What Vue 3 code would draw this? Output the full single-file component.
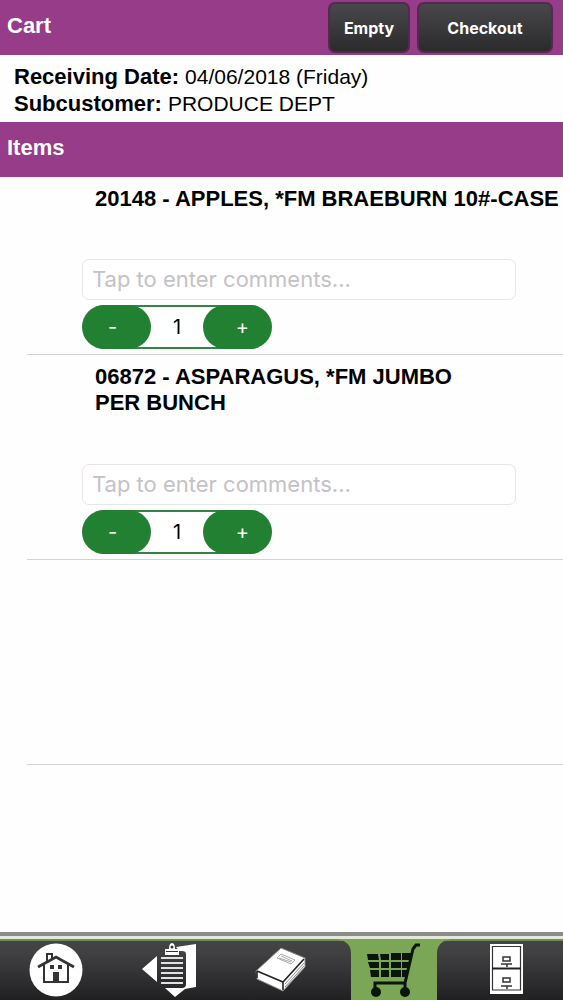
<script setup>
import { reactive } from 'vue'

const items = reactive([
  { id: '20148', lines: ['20148 - APPLES, *FM BRAEBURN 10#-CASE'], comment: '', qty: 1 },
  { id: '06872', lines: ['06872 - ASPARAGUS, *FM JUMBO', 'PER BUNCH'], comment: '', qty: 1 }
])

function step(item, delta) {
  item.qty = Math.max(0, item.qty + delta)
}
</script>

<template>
  <div class="screen">
    <header class="bar">
      <h1>Cart</h1>
      <div class="actions">
        <button type="button" class="action">Empty</button>
        <button type="button" class="action wide">Checkout</button>
      </div>
    </header>

    <dl class="info">
      <div><dt>Receiving Date:</dt><dd>04/06/2018 (Friday)</dd></div>
      <div><dt>Subcustomer:</dt><dd>PRODUCE DEPT</dd></div>
    </dl>

    <div class="bar"><h2>Items</h2></div>

    <ul class="items">
      <li v-for="item in items" :key="item.id" class="item">
        <h3><span v-for="line in item.lines" :key="line">{{ line }}</span></h3>
        <div class="controls">
          <input
            v-model="item.comment"
            class="comment"
            type="text"
            placeholder="Tap to enter comments..."
            :aria-label="`Comments for ${item.id}`"
          />
          <div class="stepper">
            <button type="button" :aria-label="`Decrease ${item.id}`" @click="step(item, -1)">-</button>
            <output>{{ item.qty }}</output>
            <button type="button" :aria-label="`Increase ${item.id}`" @click="step(item, 1)">+</button>
          </div>
        </div>
      </li>
      <li class="item" aria-hidden="true"></li>
    </ul>

    <nav class="tabs">
      <a href="#home" class="tab" aria-label="Home">
        <svg width="54" height="56" viewBox="0 0 54 56">
          <circle cx="27" cy="27" r="26.500" fill="#fff" />
          <g fill="none" stroke="#333" stroke-width="2">
            <path d="M9 24 L27 14 L45 24" stroke-width="2.600" />
            <path d="M15 22 V39 H39 V22" />
            <path d="M18 18 V11 H23 V15" />
          </g>
          <path fill="#333" d="M24 29h6v10h-6zM21 22h4v4h-4zM29 22h4v4h-4z" />
        </svg>
      </a>
      <a href="#orders" class="tab" aria-label="Orders">
        <svg width="54" height="56" viewBox="0 0 54 56">
          <path fill="#fff" d="M0 26 L15 13 V39z" />
          <path fill="#fff" d="M34 4 L54 1 V44 L43 46 L33 54 L23 45 H40 Q44 45 44 41 V11 Q44 8 40 8H37z" />
          <path fill="#fff" d="M23 6h4Q27 0 30 0T33 6h4v6H23z" />
          <circle cx="30" cy="4" r="1.500" fill="#333" />
          <path stroke="#333" stroke-width="1" d="M24 8.500h12" />
          <path stroke="#e2e2e2" stroke-width="2" d="M19 15h22M19 20h22M19 25h22M19 30h22M19 35h22M19 40h22" />
        </svg>
      </a>
      <a href="#catalog" class="tab" aria-label="Catalog">
        <svg width="54" height="56" viewBox="0 0 54 56">
          <path fill="#fff" stroke="#888" stroke-width="1" d="M2 28 L27 5 L51 15 V24 L29 48 L3 36z" />
          <path fill="none" stroke="#222" stroke-width="1.600" d="M3 28 L29 39 L50 16 M29 39 V47 M3 28 V35" />
          <path stroke="#888" stroke-width="1" d="M31 44 L50 23 M31 41 L50 20" fill="none" />
          <path fill="none" stroke="#aaa" stroke-width="1" d="M27 11 L41 17 L37 21 L23 15z M27 13 L38 18 M25 15 L37 19" />
        </svg>
      </a>
      <a href="#cart" class="tab current" aria-label="Cart" aria-current="page">
        <svg class="shape" width="110" height="61" viewBox="0 0 110 61">
          <path fill="#7ba656" d="M0 0H110V1A12 13 0 0 0 98 14V61H12V14A12 13 0 0 0 0 1z" />
        </svg>
        <svg class="cart" width="54" height="56" viewBox="0 0 54 56">
          <path fill="#0b160b" d="M0 11H11L12 17H1zM13 11H22V17H14zM24 10H34V17H24zM35 10H45L44 17H35zM1 19H12V25H3zM14 19H22V25H14zM24 19H34V25H24zM35 19H43L42 25H35zM3 27H12V34H4zM14 27H22V34H14zM24 27H34V34H24zM35 27H41L40 34H35z" />
          <path fill="none" stroke="#0b160b" stroke-width="3" d="M53 2H49L46 6L38 40H8V49M38 40V49" />
          <circle cx="9" cy="49" r="5" fill="#0b160b" /><circle cx="38" cy="49" r="5" fill="#0b160b" />
        </svg>
      </a>
      <a href="#files" class="tab" aria-label="Files">
        <svg width="54" height="56" viewBox="0 0 54 56">
          <path fill="#fff" d="M10 1H43V51H10z" />
          <path fill="none" stroke="#333" stroke-width="1.200" d="M12.500 3.500H40.500V47H12.500z" />
          <path fill="none" stroke="#222" stroke-width="2" d="M12 25.500H41" />
          <path fill="none" stroke="#333" stroke-width="1.500" d="M23 14H30V18H23zM21 21H32M27 21V24M23 35H30V39H23zM21 43H32M27 43V46" />
        </svg>
      </a>
    </nav>
  </div>
</template>

<style>
body {
  margin: 0;
  background: #fefefe;
}
</style>

<style scoped>
* {
  box-sizing: border-box;
}

.screen {
  display: flex;
  flex-direction: column;
  min-height: 100vh;
  background: #fefefe;
  color: #000;
  font-family: "Liberation Sans", Arial, sans-serif;
  font-size: 22px;
}

h1, h2, h3, ul, dl, dd {
  margin: 0;
  padding: 0;
  font-size: 22px;
}

.bar {
  display: flex;
  align-items: center;
  justify-content: space-between;
  min-height: 55px;
  padding: 0 10px 0 7px;
  background: #963c88;
  color: #fff;
  line-height: 26px;
}

h1, h2 {
  padding-bottom: 4px;
}

.actions {
  display: flex;
  gap: 7px;
}

.action {
  width: 82px;
  height: 51px;
  padding: 0;
  border: 2px solid #54294f;
  border-radius: 7px;
  background: linear-gradient(#48484a, #2b2b2d);
  color: #fff;
  font: 700 16px Inter, sans-serif;
}

.action.wide {
  width: 136px;
}

.info {
  padding: 8px 14px 5px;
  line-height: 27px;
}

.info div {
  display: flex;
  gap: 6px;
}

dt {
  font-weight: bold;
}

dd {
  font-size: 21px;
}

.items {
  list-style: none;
}

.item {
  display: flex;
  flex-direction: column;
  justify-content: space-between;
  min-height: 205px;
  margin-left: 27px;
  padding: 9px 0 5px 55px;
  border-bottom: 1px solid #d3d3d3;
}

.item:first-child {
  min-height: 178px;
}

h3 {
  padding-left: 13px;
  line-height: 26px;
}

h3 span {
  display: block;
  white-space: nowrap;
}

.controls {
  display: flex;
  flex-direction: column;
  gap: 5px;
}

.comment {
  width: calc(100% - 47px);
  height: 41px;
  padding: 0 9px 2px;
  border: 1px solid #e9e4e7;
  border-radius: 7px;
  background: #fff;
  font: 22px Inter, sans-serif;
}

.comment::placeholder {
  color: #c5c2c6;
  opacity: 1;
}

.stepper {
  display: flex;
  align-items: center;
  justify-content: space-between;
  width: 190px;
  height: 44px;
  border-radius: 22px;
  background: linear-gradient(#348543 2px, #fff 2px, #fff 42px, #348543 42px);
}

.stepper button {
  width: 69px;
  height: 44px;
  padding: 0 8px 0 0;
  border: 0;
  border-radius: 22px;
  background: #218031;
  color: #fff;
  font: 20px Inter, sans-serif;
}

.stepper button:last-child {
  padding: 0 0 0 10px;
}

output {
  font: 20px Inter, sans-serif;
}

.tabs {
  display: grid;
  grid-template-columns: repeat(5, 1fr);
  margin-top: auto;
  border-top: 4px solid #8b8b8b;
  background: linear-gradient(#e4e8d8 3px, #6f8e54 3px, #6f8e54 5px, #444 5px, #414143 16px, #202023);
}

.tab {
  display: flex;
  position: relative;
  justify-content: center;
  height: 64px;
  padding-top: 7px;
}

.shape {
  position: absolute;
  top: 3px;
  left: calc(50% - 55px);
}

.cart {
  position: relative;
}
</style>
